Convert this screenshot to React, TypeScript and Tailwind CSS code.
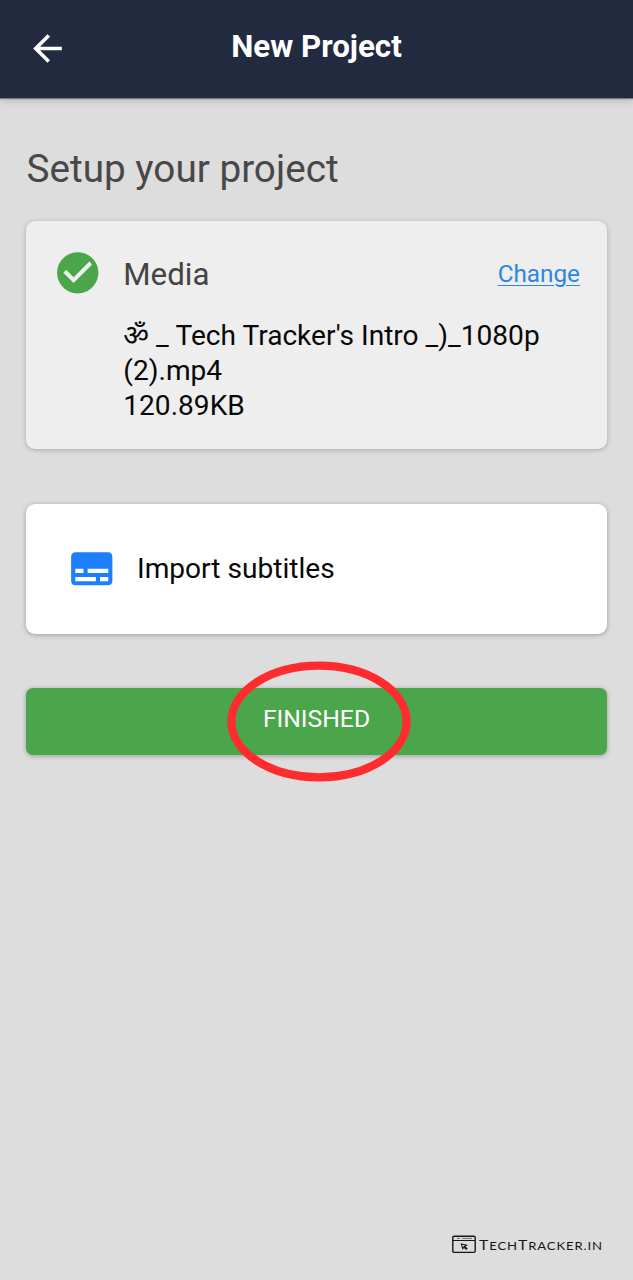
import React from "react";

type IconProps = { className?: string; d: string };

function Icon({ className, d }: IconProps) {
  return (
    <svg viewBox="0 0 24 24" fill="currentColor" className={className} aria-hidden="true">
      <path d={d} />
    </svg>
  );
}

const ARROW_BACK = "M20 11H7.83l5.59-5.59L12 4l-8 8 8 8 1.41-1.41L7.83 13H20v-2z";
const CHECK_CIRCLE =
  "M12 2C6.48 2 2 6.48 2 12s4.48 10 10 10 10-4.48 10-10S17.52 2 12 2zm-2 15l-5-5 1.41-1.41L10 14.17l7.59-7.59L19 8l-9 9z";
const SUBTITLES =
  "M20 4H4c-1.1 0-2 .9-2 2v12c0 1.1.9 2 2 2h16c1.1 0 2-.9 2-2V6c0-1.1-.9-2-2-2zM4 12h4v2H4v-2zm10 6H4v-2h10v2zm6 0h-4v-2h4v2zm0-4H10v-2h10v2z";

function Header() {
  return (
    <header className="grid h-[98px] shrink-0 grid-cols-[1fr_auto_1fr] items-center bg-[#222a40] text-white shadow-[0_1px_1px_#77788a,0_2px_9px_rgba(0,0,0,0.2)]">
      <button className="mb-[1px] ml-[26px] w-fit" aria-label="Back">
        <Icon d={ARROW_BACK} className="size-[43px]" />
      </button>
      <h1 className="mb-[5px] text-[31.3px] leading-[36px] font-bold">New Project</h1>
    </header>
  );
}

function MediaCard() {
  return (
    <section className="mt-[28px] flex h-[228px] rounded-[9px] bg-[#eeeeee] pt-[27px] pr-[27px] pl-[26.5px] shadow-[0_1px_5px_rgba(0,0,0,0.24)]">
      <Icon d={CHECK_CIRCLE} className="-mt-[0.5px] size-[49.5px] shrink-0 text-[#4ba64b]" />
      <div className="ml-[21.3px] flex-1">
        <div className="flex h-[53px] items-center justify-between">
          <h3 className="text-[31.3px] leading-[38px] text-[#444444]">Media</h3>
          <button className="mb-[2px] text-[24.3px] leading-[30px] text-[#2f86e0] underline decoration-1 underline-offset-[3px]">
            Change
          </button>
        </div>
        <div className="mt-[18px] text-[28.1px] leading-[34.8px] whitespace-nowrap text-[#080808]">
          <p>ॐ _ Tech Tracker's Intro _)_1080p</p>
          <p>(2).mp4</p>
          <p>120.89KB</p>
        </div>
      </div>
    </section>
  );
}

function Watermark() {
  return (
    <footer className="mt-auto mb-[26px] ml-[426px] flex h-[20px] items-center text-[#171717]">
      <svg viewBox="0 0 24 19" className="h-[19px] w-[24px] shrink-0" fill="none" stroke="currentColor">
        <rect x="0.8" y="1.2" width="22.4" height="16.2" rx="1.4" strokeWidth="1.4" />
        <path d="M1 5.5H23" strokeWidth="1" />
        <path d="M5 3.4H8M10 3.4H20" strokeWidth="1" opacity="0.55" />
        <path d="M9.3 9l5.2 1.3-1.9 1 2.4 2.2-.9.8-2.3-2.1-1 1.6z" strokeWidth="1.1" />
      </svg>
      <span className="mt-[3px] ml-[3px] origin-left scale-x-[1.25] font-[Lato] text-[12.6px] leading-[16px] tracking-[0.7px] whitespace-nowrap">
        T<span className="text-[10.5px]">ECH</span>T<span className="text-[10.5px]">RACKER.IN</span>
      </span>
    </footer>
  );
}

export default function App() {
  return (
    <div className="flex h-[1280px] w-[633px] flex-col overflow-hidden bg-[#dddddd] font-[Roboto,'Noto_Sans',sans-serif]">
      <Header />
      <main className="flex flex-1 flex-col px-[26px]">
        <h2 className="mt-[47px] ml-[0.5px] text-[38.7px] leading-[48px] text-[#484848]">Setup your project</h2>
        <MediaCard />
        <section className="mt-[55px] flex h-[130px] items-center rounded-[9px] bg-white pl-[40.5px] shadow-[0_1px_5px_rgba(0,0,0,0.3)]">
          <Icon d={SUBTITLES} className="size-[49.5px] text-[#1c80fa]" />
          <span className="ml-[21px] text-[28.1px] leading-[34px] text-[#080808]">Import subtitles</span>
        </section>
        <div className="relative mt-[54px]">
          <button className="flex h-[67px] w-full items-center justify-center rounded-[7px] bg-[#4ba64b] pb-[5px] text-[24.7px] leading-[30px] text-white shadow-[0_1px_5px_rgba(0,0,0,0.3)]">
            FINISHED
          </button>
          <svg viewBox="0 0 184 121" className="absolute top-[-27px] left-[200.5px] h-[121px] w-[184px]" fill="none">
            <ellipse cx="92" cy="60.5" rx="87.6" ry="55.8" stroke="#ff2c2f" strokeWidth="8.2" />
          </svg>
        </div>
        <Watermark />
      </main>
    </div>
  );
}
